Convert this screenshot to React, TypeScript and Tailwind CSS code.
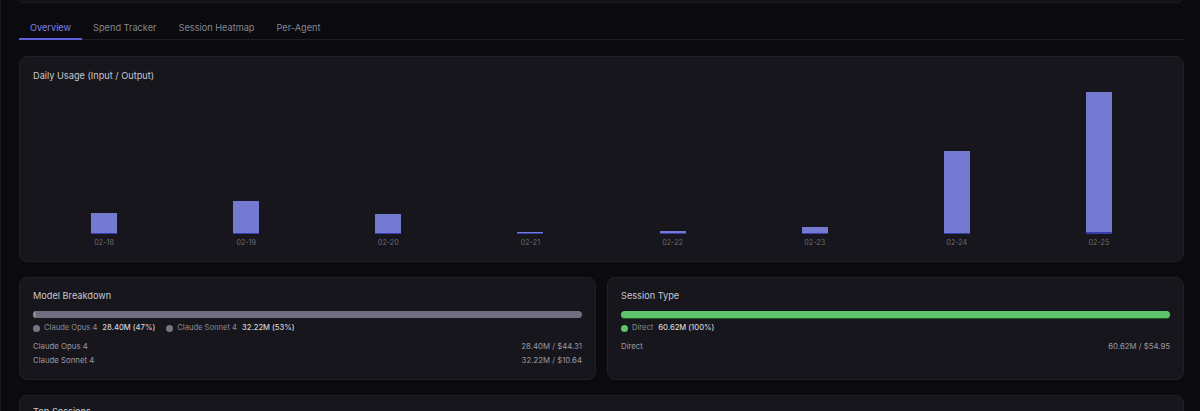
import React from "react";

const bars = [
  { label: "02-18", a: 20, b: 1 },
  { label: "02-19", a: 32, b: 1 },
  { label: "02-20", a: 19, b: 1 },
  { label: "02-21", a: 1.5, b: 1 },
  { label: "02-22", a: 2, b: 1 },
  { label: "02-23", a: 6, b: 1 },
  { label: "02-24", a: 82, b: 1.5 },
  { label: "02-25", a: 140, b: 2 },
];

const tabs = ["Overview", "Spend Tracker", "Session Heatmap", "Per-Agent"];

export default function App() {
  return (
    <div
      className="w-full h-[411px] overflow-hidden bg-[#0b0b0f] border-l border-[#17171d] pl-[18px] pr-[16px]"
      style={{ fontFamily: "Inter, 'Noto Sans', sans-serif" }}
    >
      <div className="h-[3px] bg-[#111116] border-b border-x border-[#1c1c22] rounded-b-[6px] mr-[3px]" />
      {/* Tabs */}
      <div className="mt-[12px] flex border-b border-[#1d1d24] h-[25px]">
        {tabs.map((t, i) => (
          <div
            key={t}
            className={
              "px-[11px] flex items-end pb-[4px] text-[9.2px] leading-[12px] -mb-px " +
              (i === 0
                ? "text-[#7d80e6] border-b-2 border-[#5f62dc]"
                : "text-[#85858f] border-b-2 border-transparent")
            }
          >
            {t}
          </div>
        ))}
      </div>

      {/* Chart card */}
      <div className="mt-[16px] rounded-[8px] bg-[#16161c] border border-[#202027] px-[13px] pt-[13px] pb-[13px] h-[206px]">
        <div className="text-[9.2px] leading-[12px] text-[#c8c8d0]">Daily Usage (Input / Output)</div>
        <div className="flex h-[152px]">
          {bars.map((d) => (
            <div key={d.label} className="flex-1 flex flex-col justify-end items-center">
              <div className="w-[26px] flex flex-col">
                <div className="bg-[#7479d2]" style={{ height: d.a }} />
                <div className="bg-[#3a3cb0]" style={{ height: d.b }} />
              </div>
            </div>
          ))}
        </div>
        <div className="flex mt-[4px]">
          {bars.map((d) => (
            <div key={d.label} className="flex-1 text-center text-[7.2px] leading-[10px] text-[#6c6c77]">
              {d.label}
            </div>
          ))}
        </div>
      </div>

      {/* Bottom cards */}
      <div className="mt-[15px] grid grid-cols-2 gap-[11px]">
        <div className="rounded-[8px] bg-[#16161c] border border-[#202027] px-[13px] pt-[12px] h-[103px]">
          <div className="text-[9.2px] leading-[12px] text-[#c8c8d0]">Model Breakdown</div>
          <div className="mt-[9px] h-[7px] rounded-full bg-[#6f6e80] overflow-hidden flex">
            <div className="w-[3px] bg-[#8a8996]" />
          </div>
          <div className="mt-[4px] flex items-center text-[7.6px] leading-[12px]">
            <span className="w-[7px] h-[7px] rounded-full bg-[#777680] mr-[4px]" />
            <span className="text-[#8b8b95] mr-[5px]">Claude Opus 4</span>
            <span className="text-[#d2d2da] font-medium mr-[11px]">28.40M (47%)</span>
            <span className="w-[7px] h-[7px] rounded-full bg-[#777680] mr-[4px]" />
            <span className="text-[#8b8b95] mr-[5px]">Claude Sonnet 4</span>
            <span className="text-[#d2d2da] font-medium">32.22M (53%)</span>
          </div>
          <div className="mt-[5px] flex justify-between text-[7.8px] leading-[14px] text-[#9a9aa4]">
            <span>Claude Opus 4</span>
            <span>28.40M / $44.31</span>
          </div>
          <div className="flex justify-between text-[7.8px] leading-[14px] text-[#9a9aa4]">
            <span>Claude Sonnet 4</span>
            <span>32.22M / $10.64</span>
          </div>
        </div>
        <div className="rounded-[8px] bg-[#16161c] border border-[#202027] px-[13px] pt-[12px] h-[103px]">
          <div className="text-[9.2px] leading-[12px] text-[#c8c8d0]">Session Type</div>
          <div className="mt-[9px] h-[7px] rounded-full bg-[#5fc36c] shadow-[0_1px_0_#1a5a26]" />
          <div className="mt-[4px] flex items-center text-[7.6px] leading-[12px]">
            <span className="w-[7px] h-[7px] rounded-full bg-[#5fc36c] mr-[4px]" />
            <span className="text-[#8b8b95] mr-[5px]">Direct</span>
            <span className="text-[#d2d2da] font-medium">60.62M (100%)</span>
          </div>
          <div className="mt-[5px] flex justify-between text-[7.8px] leading-[14px] text-[#9a9aa4]">
            <span>Direct</span>
            <span>60.62M / $54.95</span>
          </div>
        </div>
      </div>

      {/* Top Sessions */}
      <div className="mt-[15px] rounded-[8px] bg-[#16161c] border border-[#202027] px-[13px] pt-[10px] h-[60px]">
        <div className="text-[9.2px] leading-[12px] text-[#c8c8d0]">Top Sessions</div>
      </div>
    </div>
  );
}
